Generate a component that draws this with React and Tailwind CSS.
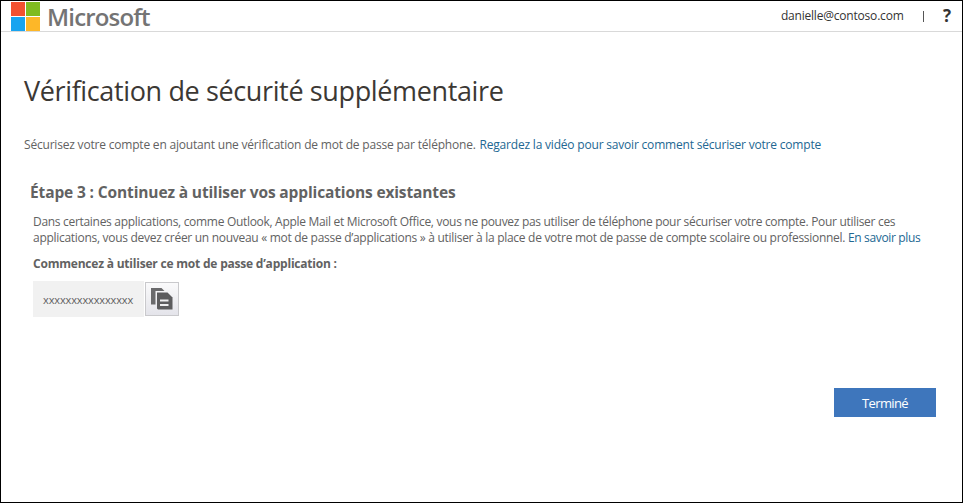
function MicrosoftLogo() {
  return (
    <div className="flex items-start">
      <div className="mt-px grid grid-cols-2 gap-px">
        <div className="h-[14px] w-[14px] bg-[#f25130]" />
        <div className="h-[14px] w-[14px] bg-[#80bb20]" />
        <div className="h-[14px] w-[14px] bg-[#18a4f0]" />
        <div className="h-[14px] w-[14px] bg-[#fdb728]" />
      </div>
      <span className="ml-[7px] text-[24px] leading-[31px] font-semibold tracking-[-0.83px] text-[#747474]">
        Microsoft
      </span>
    </div>
  );
}

function CopyIcon() {
  return (
    <svg width="24" height="24" viewBox="0 0 24 24" fill="none">
      <path d="M1 1h10.500l3 3H5.500v13.500H1z" fill="#6a6a6c" />
      <path d="M7 5.500h10.500l5 5v12H8l-1-1z" fill="#5c5c5e" />
      <path d="M10 13.500h8.500M10 18h8.500" stroke="#eeeeef" strokeWidth="1.800" />
    </svg>
  );
}

export default function App() {
  return (
    <div className="flex h-[503px] w-[963px] flex-col border border-black bg-white font-['Open_Sans','Noto_Sans',sans-serif] text-[12px] whitespace-nowrap text-[#626262]">
      <header className="flex h-[31px] shrink-0 justify-between border-b border-[#d9d9d9] pr-[11px] pl-[10px]">
        <MicrosoftLogo />
        <div className="flex h-[30px] items-center text-[#333]">
          <span className="w-[125px] tracking-[-0.2px]">danielle@contoso.com</span>
          <span className="ml-[17px] h-[11px] w-px bg-[#555]" />
          <span className="ml-[19px] text-[17px] font-bold">?</span>
        </div>
      </header>
      <main className="flex grow flex-col pl-[23px]">
        <h1 className="mt-[39px] text-[27px] leading-[40px] tracking-[-0.37px] text-[#3c3834]">
          Vérification de sécurité supplémentaire
        </h1>
        <p className="mt-[26px] flex leading-[16px] tracking-[-0.195px]">
          <span className="w-[455.5px]">
            Sécurisez votre compte en ajoutant une vérification de mot de passe par téléphone.
          </span>
          <a className="text-[#226792]">Regardez la vidéo pour savoir comment sécuriser votre compte</a>
        </p>
        <h2 className="mt-[28px] ml-[6px] text-[15.5px] leading-[22px] font-bold tracking-[-0.13px]">
          Étape 3 : Continuez à utiliser vos applications existantes
        </h2>
        <section className="ml-[9px] flex flex-col">
          <p className="mt-[11px] leading-[16px] tracking-[-0.305px]">
            Dans certaines applications, comme Outlook, Apple Mail et Microsoft Office, vous ne pouvez pas utiliser de téléphone pour sécuriser votre compte. Pour utiliser ces
          </p>
          <p className="flex leading-[16px] tracking-[-0.29px]">
            <span className="w-[815px]">
              applications, vous devez créer un nouveau « mot de passe d’applications » à utiliser à la place de votre mot de passe de compte scolaire ou professionnel.
            </span>
            <a className="tracking-[-0.35px] text-[#226792]">En savoir plus</a>
          </p>
          <h3 className="mt-[10px] leading-[16px] font-bold tracking-[-0.21px]">
            Commencez à utiliser ce mot de passe d’application :
          </h3>
          <div className="mt-[9px] flex h-[36px]">
            <div className="flex w-[111px] items-center bg-[#f1f1f1] pt-[3px] pl-[10px] text-[11px] tracking-[-0.13px]">xxxxxxxxxxxxxxxx</div>
            <button className="mt-px ml-px flex h-[34px] w-[34px] items-center justify-center border border-[#c9c9cc] bg-linear-to-b from-[#fafafb] to-[#e4e4ea]">
              <CopyIcon />
            </button>
          </div>
        </section>
        <button className="mt-[71px] mr-[26px] h-[29px] w-[102px] self-end bg-[#3e76bc] pt-[3px] text-[13px] tracking-[-0.6px] text-white">
          Terminé
        </button>
      </main>
    </div>
  );
}
